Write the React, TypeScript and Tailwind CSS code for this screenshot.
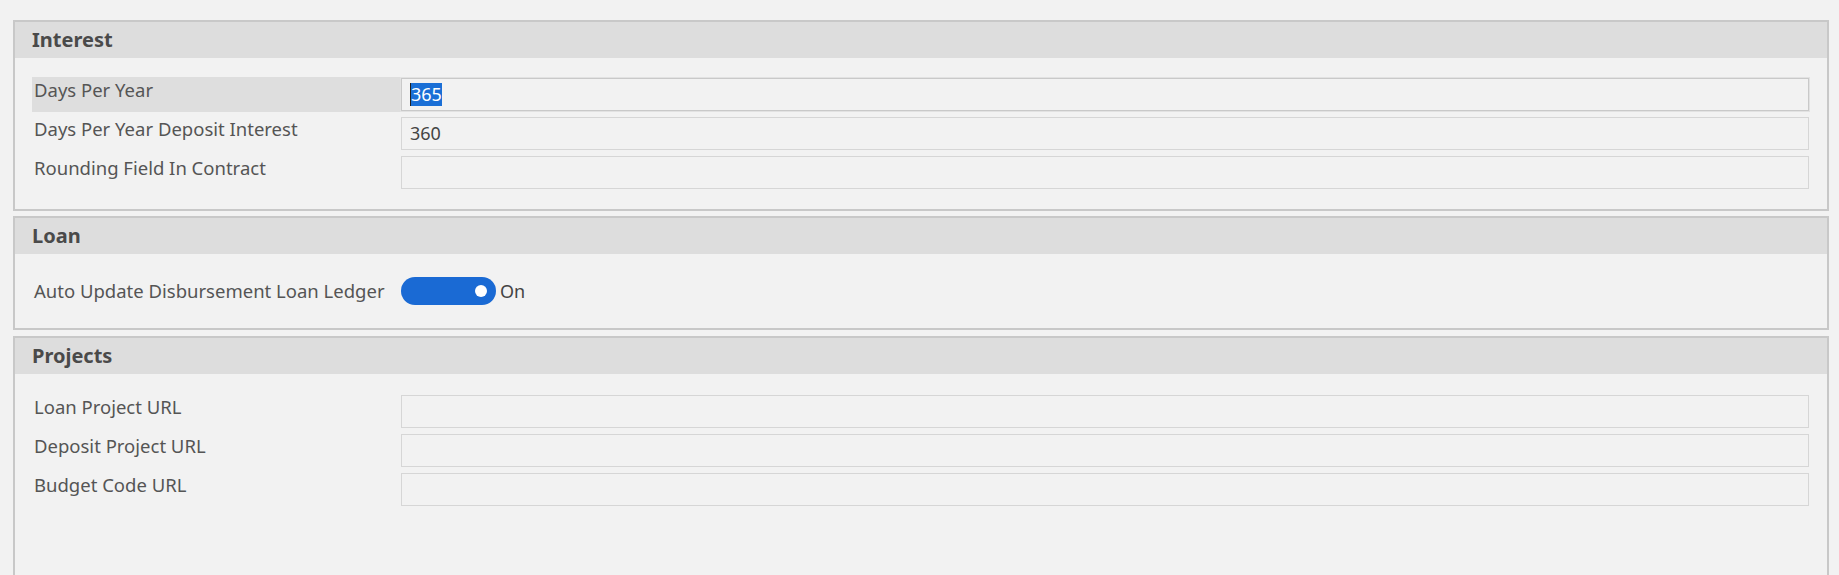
import React from "react";

interface RowProps {
	label: string;
	active?: boolean;
	children?: React.ReactNode;
}

function Panel({ title, className = "", children }: { title: string; className?: string; children: React.ReactNode }) {
	return (
		<section className={`border-2 border-[#c8c8c8] bg-[#f2f2f2] ${className}`}>
			<h2 className="flex h-[36px] items-center bg-[#dddddd] pl-[17px] text-[20px] font-bold text-[#4a4a4a]">{title}</h2>
			{children}
		</section>
	);
}

function Row({ label, active, children }: RowProps) {
	return (
		<div className="flex h-[35px]">
			<div className={`w-[369px] shrink-0 pl-[2px] pt-[1px] leading-6 ${active ? "bg-[#dedede]" : ""}`}>{label}</div>
			<div className="flex flex-1 items-center">{children}</div>
		</div>
	);
}

function Field({ value, focused }: { value?: React.ReactNode; focused?: boolean }) {
	return (
		<div
			className={`flex h-[33px] w-full items-center border bg-[#f2f2f2] px-[8px] text-[18px] text-[#444444] ${
				focused ? "border-[#c9c9c9] shadow-[0_0_0_1px_#e2e2e2]" : "border-[#d6d6d6]"
			}`}
		>
			{value}
		</div>
	);
}

export default function App() {
	return (
		<div className="min-h-screen bg-[#f2f2f2] pt-[20px] pl-[13px] pr-[10px] font-['Noto_Sans',sans-serif] text-[18.5px] text-[#555555]">
			<Panel title="Interest">
				<div className="flex flex-col gap-[4px] pt-[19px] pr-[18px] pb-[19px] pl-[17px]">
					<Row label="Days Per Year" active>
						<Field
							focused
							value={<span className="border-l border-[#222] bg-[#1a6fd6] leading-[23px] text-white">365</span>}
						/>
					</Row>
					<Row label="Days Per Year Deposit Interest">
						<Field value="360" />
					</Row>
					<Row label="Rounding Field In Contract">
						<Field />
					</Row>
				</div>
			</Panel>

			<Panel title="Loan" className="mt-[5px]">
				<div className="flex items-center py-[23px] pl-[17px] pr-[18px]">
					<div className="w-[369px] shrink-0 pl-[2px]">Auto Update Disbursement Loan Ledger</div>
					<button className="flex h-[28px] w-[95px] items-center justify-end rounded-full bg-[#1a6ad4] pr-[9px]">
						<span className="h-[12px] w-[12px] rounded-full bg-white" />
					</button>
					<span className="ml-[4px] text-[18px] text-[#444444]">On</span>
				</div>
			</Panel>

			<Panel title="Projects" className="mt-[6px]">
				<div className="flex min-h-[260px] flex-col gap-[4px] pt-[20px] pr-[18px] pl-[17px]">
					<Row label="Loan Project URL">
						<Field />
					</Row>
					<Row label="Deposit Project URL">
						<Field />
					</Row>
					<Row label="Budget Code URL">
						<Field />
					</Row>
				</div>
			</Panel>
		</div>
	);
}
